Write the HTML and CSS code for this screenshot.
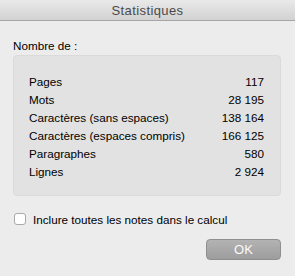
FILE: index.html
```html
<!DOCTYPE html>
<html lang="fr">
<head>
<meta charset="utf-8">
<title>Statistiques</title>
<link rel="stylesheet" href="styles.css">
</head>
<body>
<div class="window">
  <div class="titlebar">Statistiques</div>
  <div class="content">
    <div class="label">Nombre de :</div>
    <div class="box">
      <div class="row"><span>Pages</span><span>117</span></div>
      <div class="row"><span>Mots</span><span>28 195</span></div>
      <div class="row"><span>Caractères (sans espaces)</span><span>138 164</span></div>
      <div class="row"><span>Caractères (espaces compris)</span><span>166 125</span></div>
      <div class="row"><span>Paragraphes</span><span>580</span></div>
      <div class="row"><span>Lignes</span><span>2 924</span></div>
    </div>
    <label class="check"><span class="checkbox"></span><span>Inclure toutes les notes dans le calcul</span></label>
    <div class="actions"><button class="ok">OK</button></div>
  </div>
</div>
</body>
</html>
```
FILE: styles.css
```css
html, body {
  margin: 0;
  padding: 0;
  background: #ececec;
}
.window {
  width: 295px;
  height: 276px;
  background: #ececec;
  font-family: "Liberation Sans", Arial, sans-serif;
  color: #000;
}
.titlebar {
  height: 20px;
  line-height: 21px;
  border-bottom: 1px solid #a6a6a6;
  background: linear-gradient(#e9e9e9, #d2d2d2);
  text-align: center;
  font-size: 13px;
  letter-spacing: 0.4px;
  color: #4a4a4a;
}
.content {
  padding: 0 14px 0 13px;
}
.label {
  margin-top: 17px;
  height: 16px;
  line-height: 16px;
  font-size: 11.7px;
}
.box {
  margin-top: 1px;
  padding: 17px 16px 14px 15px;
  background: #e2e2e2;
  border: 1px solid #dadada;
  border-radius: 4px;
}
.row {
  display: flex;
  justify-content: space-between;
  height: 18px;
  line-height: 18px;
  font-size: 11.7px;
}
.check {
  display: flex;
  align-items: center;
  gap: 7px;
  margin-top: 15px;
  height: 16px;
  font-size: 11.7px;
  margin-left: 1px;
}
.checkbox {
  width: 10px;
  height: 10px;
  border: 1px solid #a9a9a9;
  border-radius: 3px;
  background: #fff;
}
.actions {
  display: flex;
  justify-content: flex-end;
  margin-top: 12px;
}
.ok {
  width: 75px;
  height: 21px;
  padding: 0;
  border: 1px solid #8f8f8f;
  border-radius: 4px;
  background: linear-gradient(#b3b3b3, #9d9d9d);
  color: #fafafa;
  font-family: "Liberation Sans", Arial, sans-serif;
  font-size: 13px;
  line-height: 19px;
}
```
